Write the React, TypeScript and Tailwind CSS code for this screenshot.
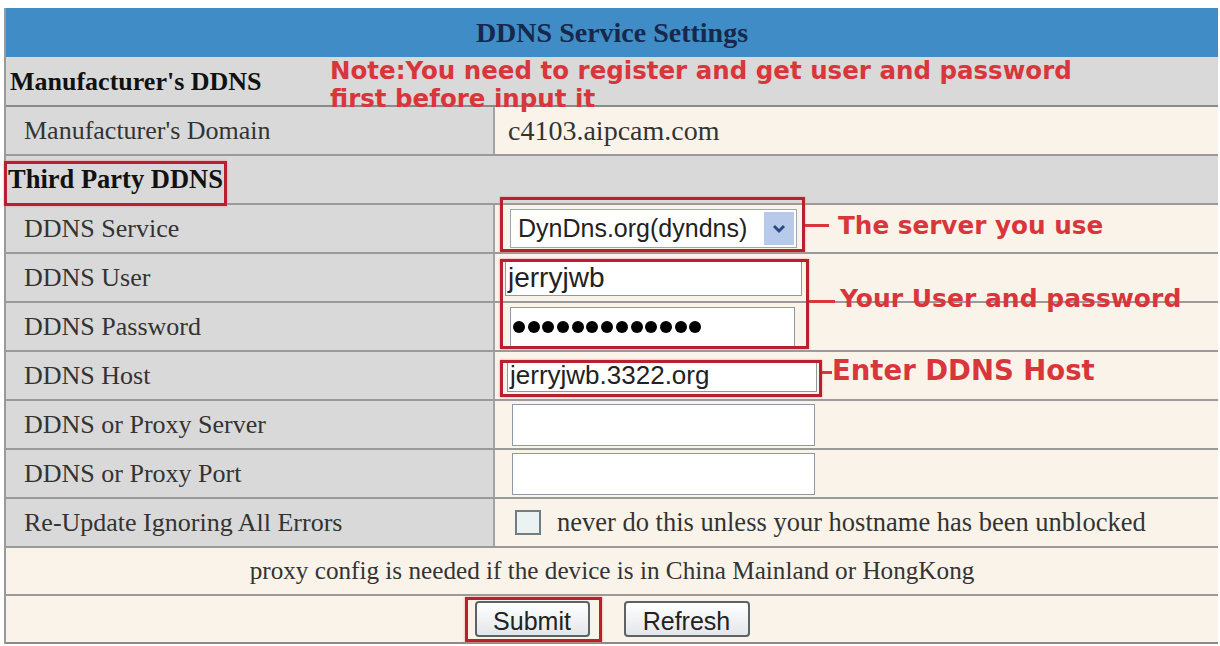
import React from "react";

const serif = "font-['Liberation_Serif',serif]";
const sans = "font-['Liberation_Sans',Arial,sans-serif]";
const note = "font-['DejaVu_Sans',Verdana,sans-serif] font-bold text-[#d9363b]";

function Row({ label, children, bold }: { label: string; children?: React.ReactNode; bold?: boolean }) {
  return (
    <div className="flex h-[49px] border-b-2 border-[#9a9a9a]">
      <div
        className={`w-[489px] shrink-0 flex items-center bg-[#d9d9d9] border-r-2 border-[#a3a3a3] ${
          bold ? "pl-[4px] font-bold text-[#111]" : "pl-[18px] text-[#333]"
        } ${serif} text-[26px]`}
      >
        {label}
      </div>
      <div className="flex-1 flex items-center bg-[#f9f3ea] pl-[15px]">{children}</div>
    </div>
  );
}

function TextBox({ w, h, ml = 0, size = 25, children }: { w: number; h: number; ml?: number; size?: number; children?: React.ReactNode }) {
  return (
    <div
      className={`flex items-center bg-white border border-[#8d9aa5] pl-[2px] ${sans} text-[#222]`}
      style={{ width: w, height: h, marginLeft: ml, fontSize: size }}
    >
      {children}
    </div>
  );
}

function RedBox({ x, y, w, h }: { x: number; y: number; w: number; h: number }) {
  return (
    <div
      className="absolute border-[3px] border-[#b9202e] shadow-[0_0_2px_#f08a90] pointer-events-none"
      style={{ left: x, top: y, width: w, height: h }}
    />
  );
}

function Line({ x, y, w }: { x: number; y: number; w: number }) {
  return <div className="absolute h-[3px] bg-[#d9363b]" style={{ left: x, top: y, width: w }} />;
}

export default function App() {
  return (
    <div className="relative w-[1220px] h-[646px] bg-white pt-[8px] pl-[4px] pr-[2px] overflow-hidden">
      <div className="border-l-2 border-[#9a9a9a]">
        <div className={`h-[49px] flex items-center justify-center bg-[#3f8cc6] ${serif} font-bold text-[28px] text-[#17284d]`}>
          DDNS Service Settings
        </div>
        <div className={`h-[50px] flex items-center bg-[#d9d9d9] border-b-2 border-[#8a8a8a] pl-[4px] ${serif} font-bold text-[26px] text-[#111]`}>
          Manufacturer's DDNS
        </div>
        <Row label="Manufacturer's Domain">
          <span className={`-ml-[2px] ${serif} text-[28px] text-[#333]`}>c4103.aipcam.com</span>
        </Row>
        <div className={`h-[49px] flex items-center bg-[#d9d9d9] border-b-2 border-[#9a9a9a] pl-[2px] ${serif} font-bold text-[26.5px] text-[#111]`}>
          Third Party DDNS
        </div>
        <Row label="DDNS Service">
          <div className={`w-[287px] h-[39px] flex items-center justify-between bg-white border border-[#9aa8b4] pl-[7px] pr-[2px] ${sans} text-[25px] text-[#222]`}>
            <span>DynDns.org(dyndns)</span>
            <span className="w-[30px] h-[33px] flex items-center justify-center bg-[#b7caec]">
              <svg width="14" height="10" viewBox="0 0 14 10">
                <path d="M2 2 L7 7 L12 2" fill="none" stroke="#2b4a85" strokeWidth="3" />
              </svg>
            </span>
          </div>
        </Row>
        <Row label="DDNS User">
          <TextBox w={297} h={36} ml={-5} size={28}>jerryjwb</TextBox>
        </Row>
        <Row label="DDNS Password">
          <TextBox w={285} h={40}>
            <div className="flex gap-[2.7px]">
              {Array.from({ length: 13 }).map((_, i) => (
                <span key={i} className="w-[12px] h-[12px] rounded-full bg-black" />
              ))}
            </div>
          </TextBox>
        </Row>
        <Row label="DDNS Host">
          <TextBox w={310} h={32} ml={-3} size={26}>jerryjwb.3322.org</TextBox>
        </Row>
        <Row label="DDNS or Proxy Server">
          <TextBox w={303} h={42} ml={2} />
        </Row>
        <Row label="DDNS or Proxy Port">
          <TextBox w={303} h={42} ml={2} />
        </Row>
        <Row label="Re-Update Ignoring All Errors">
          <div className="w-[26px] h-[25px] ml-[5px] border-2 border-[#6f7d84] bg-[#eaf2f2]" />
          <span className={`ml-[16px] ${serif} text-[26.5px] text-[#333]`}>
            never do this unless your hostname has been unblocked
          </span>
        </Row>
        <div className={`h-[48px] flex items-center justify-center bg-[#f9f3ea] border-b-2 border-[#9a9a9a] ${serif} text-[25.2px] text-[#333]`}>
          proxy config is needed if the device is in China Mainland or HongKong
        </div>
        <div className="h-[48px] flex items-center justify-center gap-[34px] bg-[#f9f3ea] border-b-2 border-[#8a8a8a]">
          <button className={`w-[115px] h-[36px] rounded-[4px] border-2 border-[#5d6266] bg-gradient-to-b from-white to-[#e3e6ea] ${sans} text-[25px] text-[#222]`}>
            Submit
          </button>
          <button className={`w-[126px] h-[36px] rounded-[4px] border-2 border-[#5d6266] bg-gradient-to-b from-white to-[#e3e6ea] ${sans} text-[25px] text-[#222]`}>
            Refresh
          </button>
        </div>
      </div>

      <div className={`absolute left-[330px] top-[57px] leading-[28px] text-[24.5px] ${note}`}>
        Note:You need to register and get user and password
        <br />
        first before input it
      </div>

      <RedBox x={4} y={161} w={223} h={45} />
      <RedBox x={500} y={197} w={305} h={55} />
      <RedBox x={500} y={259} w={309} h={90} />
      <RedBox x={500} y={360} w={322} h={37} />
      <RedBox x={465} y={597} w={137} h={45} />

      <Line x={805} y={224} w={24} />
      <Line x={809} y={300} w={26} />
      <Line x={822} y={371} w={10} />

      <div className={`absolute left-[838px] top-[212px] text-[24.7px] leading-[28px] ${note}`}>The server you use</div>
      <div className={`absolute left-[840px] top-[285px] text-[25px] leading-[28px] ${note}`}>Your User and password</div>
      <div className={`absolute left-[832px] top-[355px] text-[27.5px] leading-[30px] ${note}`}>Enter DDNS Host</div>
    </div>
  );
}
